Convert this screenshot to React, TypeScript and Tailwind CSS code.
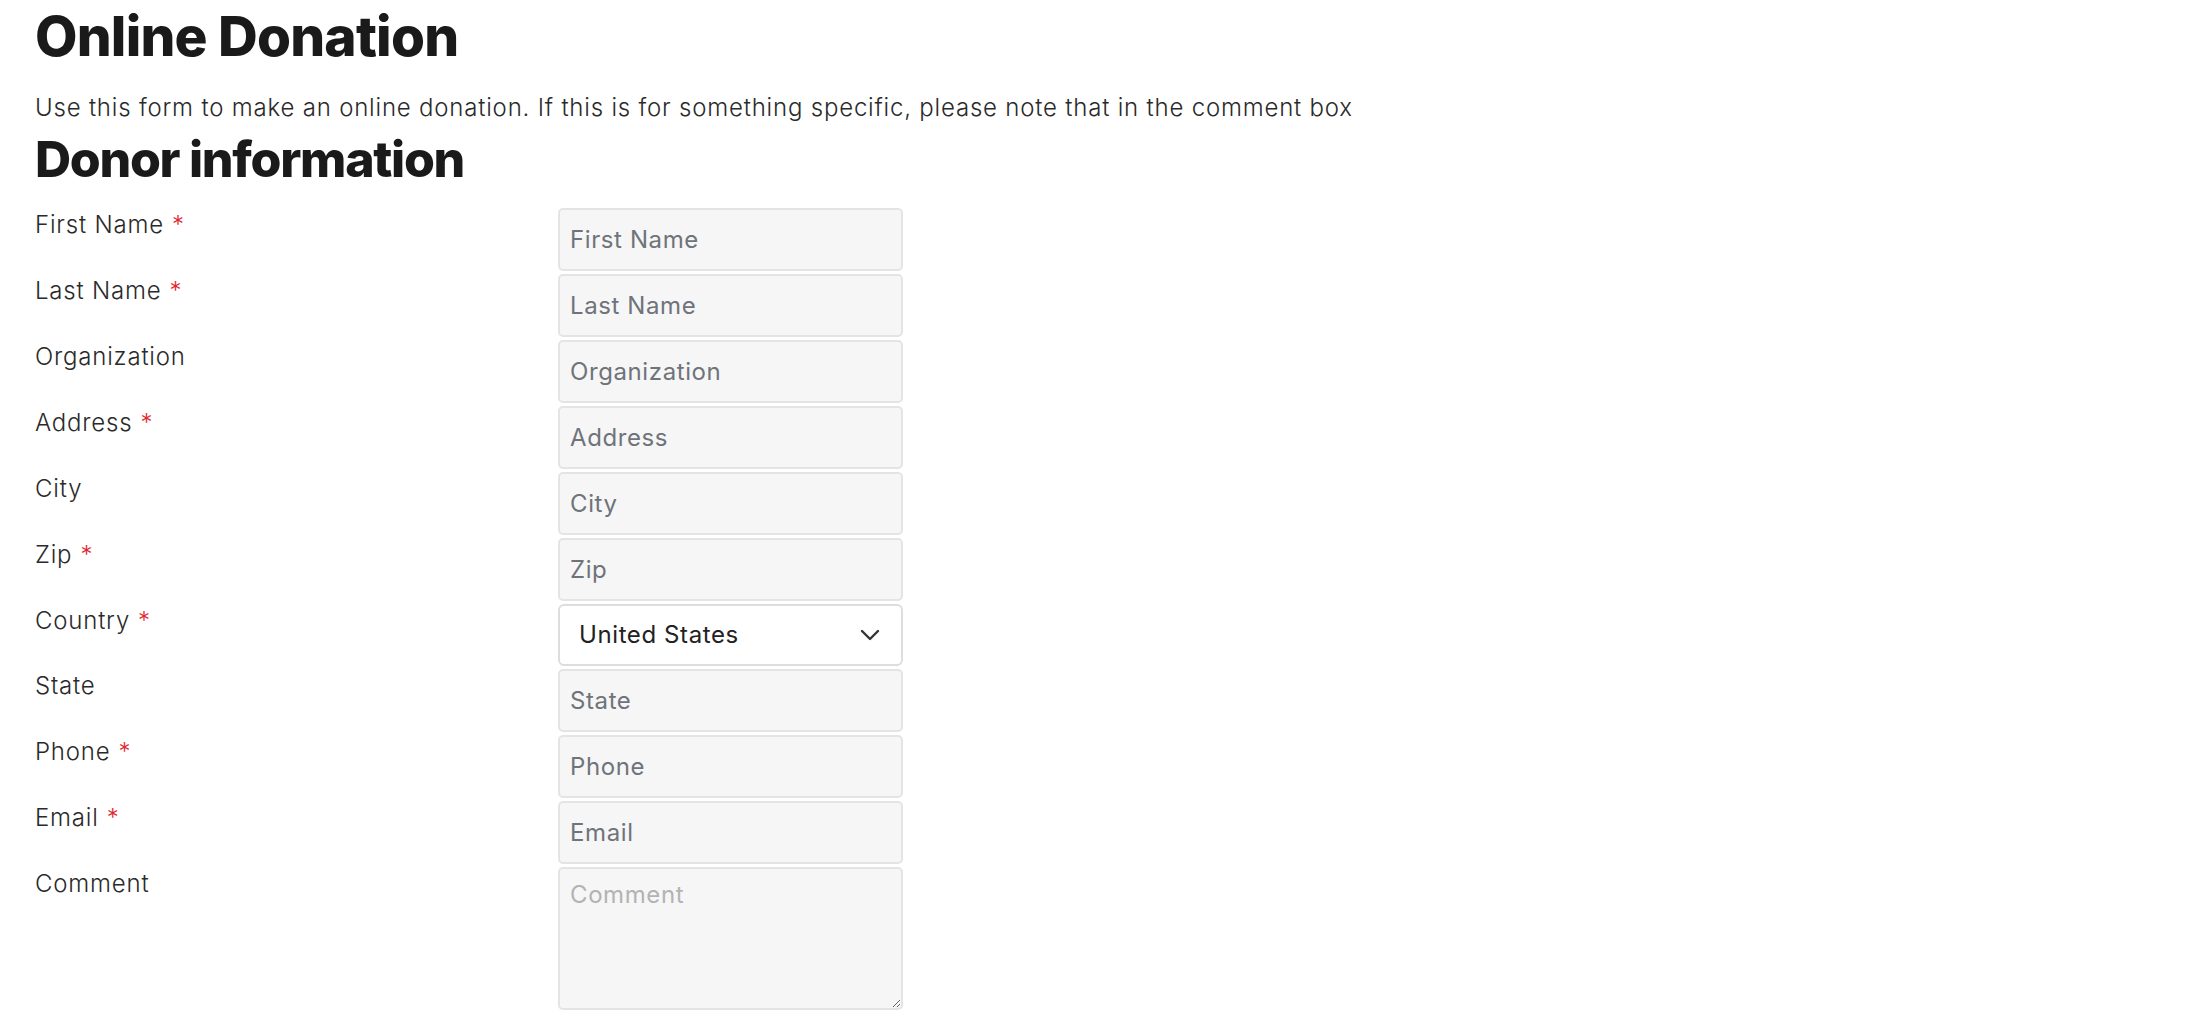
import React from 'react';
import { ChevronDown } from 'lucide-react';

interface Field {
  name: string;
  label: string;
  required?: boolean;
  type?: 'text' | 'select' | 'textarea';
}

const fields: Field[] = [
  { name: 'firstName', label: 'First Name', required: true },
  { name: 'lastName', label: 'Last Name', required: true },
  { name: 'organization', label: 'Organization' },
  { name: 'address', label: 'Address', required: true },
  { name: 'city', label: 'City' },
  { name: 'zip', label: 'Zip', required: true },
  { name: 'country', label: 'Country', required: true, type: 'select' },
  { name: 'state', label: 'State' },
  { name: 'phone', label: 'Phone', required: true },
  { name: 'email', label: 'Email', required: true },
  { name: 'comment', label: 'Comment', type: 'textarea' },
];

const inputClass =
  'w-[345px] rounded-[5px] border-2 border-[#e4e4e4] bg-[#f6f6f6] pl-[10px] text-[24px] tracking-[0.6px] text-[#222] outline-none';

const App: React.FC = () => {
  return (
    <div className="min-h-screen bg-white pl-[35px] font-['Inter','Liberation_Sans',sans-serif] text-[#2a2a2a]">
      <h1 className="pt-[3px] text-[55px] font-extrabold leading-[66px] tracking-[-0.8px] text-[#1a1a1a]">Online Donation</h1>
      <p className="mt-[22px] text-[24px] font-light leading-[34px] tracking-[0.8px]">
        Use this form to make an online donation. If this is for something specific, please note that in the comment box
      </p>
      <h2 className="mt-[4px] text-[50px] font-extrabold leading-[60px] tracking-[-1.3px] text-[#1a1a1a]">Donor information</h2>

      <form className="mt-[19px] flex flex-col gap-[3px]">
        {fields.map(field => (
          <div key={field.name} className="flex items-start">
            <label htmlFor={field.name} className="w-[523px] text-[24px] font-light leading-[34px] tracking-[0.8px]">
              {field.label}
              {field.required && <span className="ml-[8px] text-[#e0262f]">*</span>}
            </label>

            {field.type === 'select' && (
              <div className="relative">
                <select
                  id={field.name}
                  defaultValue="United States"
                  className="h-[62px] w-[345px] appearance-none rounded-[6px] border-2 border-[#dddddd] bg-white pl-[19px] text-[24px] tracking-[0.6px] text-[#222] outline-none"
                >
                  <option>United States</option>
                  <option>Canada</option>
                  <option>Mexico</option>
                </select>
                <ChevronDown
                  size={32}
                  strokeWidth={1.8}
                  className="pointer-events-none absolute right-[17px] top-[15px] text-[#333]"
                />
              </div>
            )}

            {field.type === 'textarea' && (
              <textarea
                id={field.name}
                placeholder={field.label}
                className={`${inputClass} h-[143px] pt-[9px] leading-[34px] placeholder:text-[#b3b3b3]`}
              />
            )}

            {!field.type && (
              <input
                id={field.name}
                type="text"
                placeholder={field.label}
                className={`${inputClass} h-[63px] placeholder:text-[#6f737a]`}
              />
            )}
          </div>
        ))}
      </form>
    </div>
  );
};

export default App;
